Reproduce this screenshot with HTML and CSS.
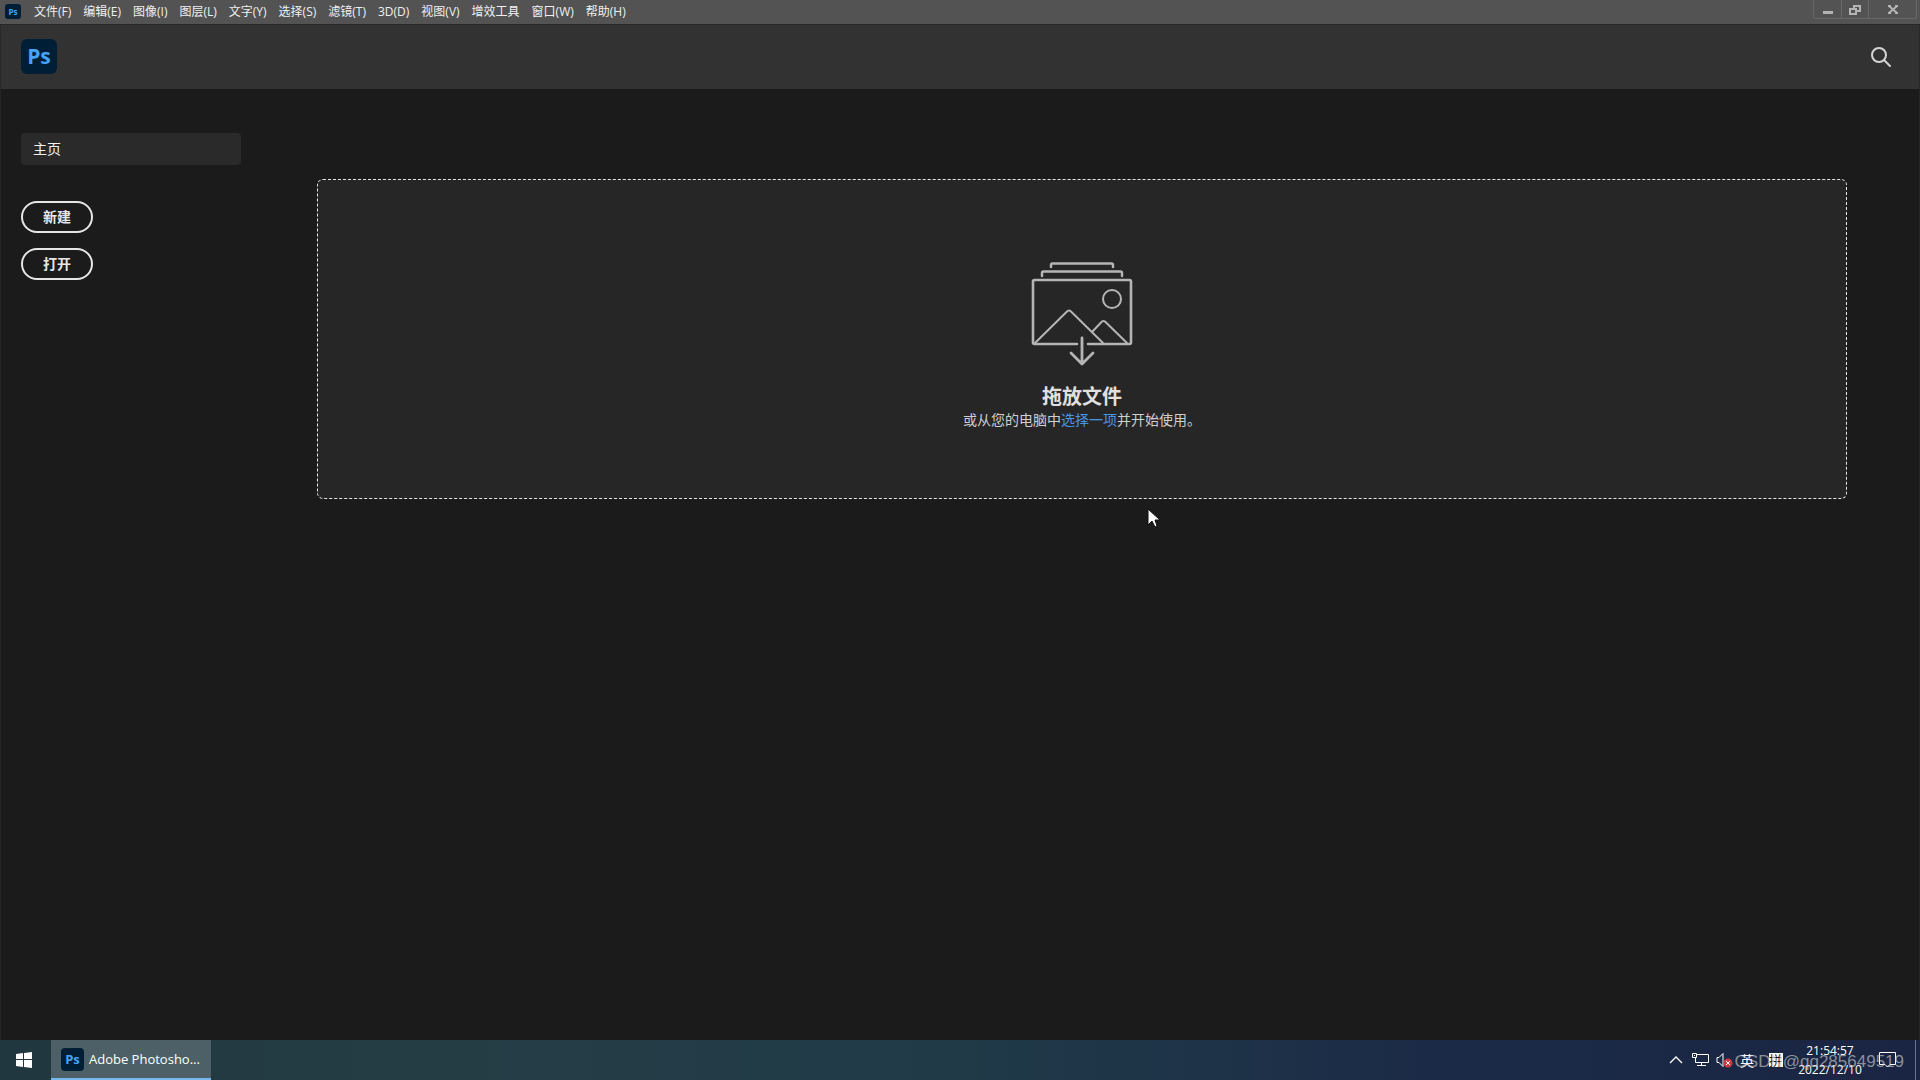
FILE: index.html
```html
<!DOCTYPE html>
<html lang="zh-CN">
<head>
<meta charset="utf-8">
<title>Adobe Photoshop</title>
<link rel="stylesheet" href="styles.css">
</head>
<body>
<div class="menubar">
  <span class="ps-logo ps-logo-small">Ps</span>
  <nav class="menus">
    <button>文件(F)</button>
    <button>编辑(E)</button>
    <button>图像(I)</button>
    <button>图层(L)</button>
    <button>文字(Y)</button>
    <button>选择(S)</button>
    <button>滤镜(T)</button>
    <button>3D(D)</button>
    <button>视图(V)</button>
    <button>增效工具</button>
    <button>窗口(W)</button>
    <button>帮助(H)</button>
  </nav>
  <div class="window-controls">
    <button aria-label="最小化"><svg width="12" height="12" viewBox="0 0 12 12"><path d="M1 7h10v3H1z" fill="#b4b4b4"/></svg></button>
    <button aria-label="还原"><svg width="12" height="12" viewBox="0 0 12 12" fill="none" stroke="#b4b4b4" stroke-width="2"><path d="M5 5V2h6v5H8M1 5h6v5H1z"/></svg></button>
    <button class="close" aria-label="关闭"><svg width="12" height="12" viewBox="0 0 12 12"><path d="M2 2l8 7M10 2L2 9" stroke="#b4b4b4" stroke-width="2"/><path d="M1 1h3v2H1zM8 1h3v2H8zM1 8h3v2H1zM8 8h3v2H8z" fill="#b4b4b4"/></svg></button>
  </div>
</div>
<header class="app-header">
  <span class="ps-logo ps-logo-large">Ps</span>
  <button class="search" aria-label="搜索"><svg width="22" height="22" viewBox="0 0 22 22" fill="none" stroke="#d4d4d4" stroke-width="2"><circle cx="9" cy="9" r="7"/><path d="M14 14l6 6" stroke-linecap="round"/></svg></button>
</header>
<main class="home">
  <aside class="sidebar">
    <a class="home-tab" href="#">主页</a>
    <button class="pill">新建</button>
    <button class="pill">打开</button>
  </aside>
  <section class="dropzone">
    <svg class="drop-icon" width="102" height="104" viewBox="0 0 102 104" fill="none" stroke="#b5b5b5" stroke-width="2" stroke-linecap="round" stroke-linejoin="round">
      <path d="M20 5V3q0-1.500 1.500-1.500h59q1.500 0 1.500 1.500v2M11 14v-3q0-1.500 1.500-1.500h77q1.500 0 1.500 1.500v3" stroke-width="2.500"/>
      <path d="M46 82H3.500q-1.500 0-1.500-1.500V19.500q0-1.500 1.500-1.500h95q1.500 0 1.500 1.500v61q0 1.500-1.500 1.500H57" stroke-width="2.600"/>
      <circle cx="81" cy="37" r="9"/>
      <path d="M4 81L35.500 50Q38 47 40.500 50L72 81M61 70L70 60.500Q72.500 57.500 75 60.500L96 81"/>
      <path d="M51 76v26M40 91l11 11 11-11" stroke-width="2.800"/>
    </svg>
    <h1>拖放文件</h1>
    <p>或从您的电脑中<a href="#">选择一项</a>并开始使用。</p>
  </section>
  <svg class="cursor" width="13" height="20" viewBox="0 0 13 20"><path d="M1 1v16l4-4 3 6 2-1-2-6h5z" fill="#fff" stroke="#111" stroke-width="1"/></svg>
</main>
<footer class="taskbar">
  <button class="start" aria-label="开始"><svg width="16" height="16" viewBox="0 0 16 16" fill="#fff"><path d="M0 2l7-1v6H0zM8 1l8-1v7H8zM0 8h7v7l-7-1zM8 8h8v8l-8-1z"/></svg></button>
  <button class="task"><span class="ps-logo ps-logo-medium">Ps</span><span>Adobe Photosho...</span></button>
  <div class="tray">
    <svg width="14" height="8" viewBox="0 0 14 8" fill="none" stroke="#fff" stroke-width="1.300"><path d="M1 7l6-6 6 6"/></svg>
    <svg class="network" width="17" height="14" viewBox="0 0 17 14" fill="none" stroke="#fff"><path d="M5 1.500h11.500v8h-13V5M5 12.500h9M9.500 10v2.500M.5 .5h4v4h-4zM2 2.500h1"/></svg>
    <svg class="volume" width="17" height="16" viewBox="0 0 17 16"><path d="M1 5.500h2l4-4v13l-4-4H1z" fill="none" stroke="#fff"/><circle cx="12" cy="11" r="4.500" fill="#c93a40"/><path d="M10 9l4 4m0-4l-4 4" stroke="#fff"/></svg>
    <span class="lang">英</span>
    <span class="ime">拼</span>
    <time class="clock">21:54:57<br>2022/12/10</time>
    <svg class="notice" width="17" height="16" viewBox="0 0 17 16" fill="none" stroke="#fff"><path d="M.5 .5h16v12H11l-2.500 2.500L6 12.500H.5z"/></svg>
    <span class="show-desktop"></span>
  </div>
  <span class="watermark">CSDN@qq285649519</span>
</footer>
</body>
</html>
```
FILE: styles.css
```css
* {
  box-sizing: border-box;
}

body {
  margin: 0;
  min-height: 100vh;
  display: flex;
  flex-direction: column;
  background: #1b1b1b;
  color: #e8e8e8;
  font-family: "Open Sans", "Noto Sans CJK SC", sans-serif;
  font-size: 14px;
}

button {
  border: 0;
  padding: 0;
  background: none;
  color: inherit;
  font: inherit;
}

a {
  text-decoration: none;
}

svg {
  display: block;
  flex: none;
}

.menubar {
  height: 24px;
  display: flex;
  align-items: flex-start;
  padding-left: 5px;
  background: #535353;
}

.menus {
  display: flex;
  gap: 12px;
  margin-left: 13px;
  font-size: 12px;
  line-height: 24px;
  color: #f0f0f0;
}

.menus button {
  white-space: nowrap;
}

.ps-logo {
  display: flex;
  flex: none;
  align-items: center;
  justify-content: center;
  background: #001e36;
  color: #43a5fa;
  font-weight: 700;
  line-height: 1;
}

.ps-logo-small {
  width: 16px;
  height: 15px;
  margin-top: 4px;
  border-radius: 3px;
  font-size: 8px;
}

.ps-logo-medium {
  width: 23px;
  height: 23px;
  border-radius: 4px;
  font-size: 13px;
}

.ps-logo-large {
  width: 36px;
  height: 35px;
  border-radius: 6px;
  font-size: 21px;
}

.window-controls {
  display: flex;
  height: 19px;
  margin-left: auto;
  margin-right: 3px;
  border: 1px solid #686868;
  border-top: 0;
  border-radius: 0 0 3px 3px;
}

.window-controls button {
  width: 27px;
  display: flex;
  justify-content: center;
  padding-top: 4px;
}

.window-controls button + button {
  border-left: 1px solid #686868;
}

.window-controls .close {
  width: 48px;
}

.app-header {
  height: 65px;
  display: flex;
  align-items: center;
  justify-content: space-between;
  padding: 0 27px 1px 20px;
  border: 1px solid #292929;
  border-width: 1px 1px 0;
  background: #323232;
}

.home {
  position: relative;
  flex: 1;
  display: flex;
  align-items: flex-start;
  padding: 44px 72px 0 20px;
  border: 1px solid #242424;
  border-width: 0 1px;
}

.sidebar {
  flex: none;
  width: 220px;
  margin-right: 76px;
  display: flex;
  flex-direction: column;
  align-items: flex-start;
}

.home-tab {
  width: 100%;
  height: 32px;
  margin-bottom: 36px;
  padding-left: 12px;
  border-radius: 4px;
  background: #2a2a2a;
  color: #f2f2f2;
  line-height: 32px;
}

.pill {
  width: 72px;
  height: 32px;
  margin-bottom: 15px;
  border: 2px solid #e6e6e6;
  border-radius: 16px;
  color: #e6e6e6;
  font-weight: 700;
  line-height: 28px;
}

.dropzone {
  flex: 1;
  height: 320px;
  margin-top: 46px;
  padding-top: 82px;
  display: flex;
  flex-direction: column;
  align-items: center;
  border: 1px dashed #e6e6e6;
  border-radius: 6px;
  background: #262626;
}

.dropzone h1 {
  margin: 18px 0 0;
  color: #e0e0e0;
  font-size: 20px;
  line-height: 26px;
}

.dropzone p {
  margin: 0;
  color: #cfcfcf;
  line-height: 20px;
}

.dropzone a {
  color: #4b95e6;
}

.cursor {
  position: absolute;
  left: 1146px;
  top: 419px;
}

.taskbar {
  position: relative;
  height: 40px;
  display: flex;
  background: linear-gradient(90deg, #21373f 0%, #243d45 25%, #203a48 50%, #1b2b47 75%, #1a2543 100%);
  color: #fff;
}

.start {
  width: 51px;
  padding-left: 16px;
}

.task {
  width: 160px;
  display: flex;
  align-items: center;
  gap: 5px;
  padding-left: 10px;
  border-bottom: 2px solid #76b9ed;
  background: #4d6067;
  font-size: 13px;
}

.tray {
  display: flex;
  align-items: center;
  margin-left: auto;
}

.network {
  margin-left: 9px;
}

.volume {
  margin-left: 7px;
}

.lang {
  margin-left: 7px;
  font-size: 14px;
}

.ime {
  width: 14px;
  height: 14px;
  margin-left: 15px;
  background: #fff;
  color: #111;
  font-size: 13px;
  line-height: 14px;
}

.clock {
  width: 70px;
  margin-left: 12px;
  font-size: 12px;
  line-height: 19px;
  text-align: center;
}

.notice {
  margin-left: 14px;
}

.show-desktop {
  width: 5px;
  height: 40px;
  margin-left: 19px;
  border-left: 1px solid #68758b;
}

.watermark {
  position: absolute;
  right: 16px;
  top: 12px;
  color: rgba(205, 205, 205, 0.65);
  font-family: "Liberation Sans", sans-serif;
  font-size: 17px;
  line-height: 20px;
}
```
